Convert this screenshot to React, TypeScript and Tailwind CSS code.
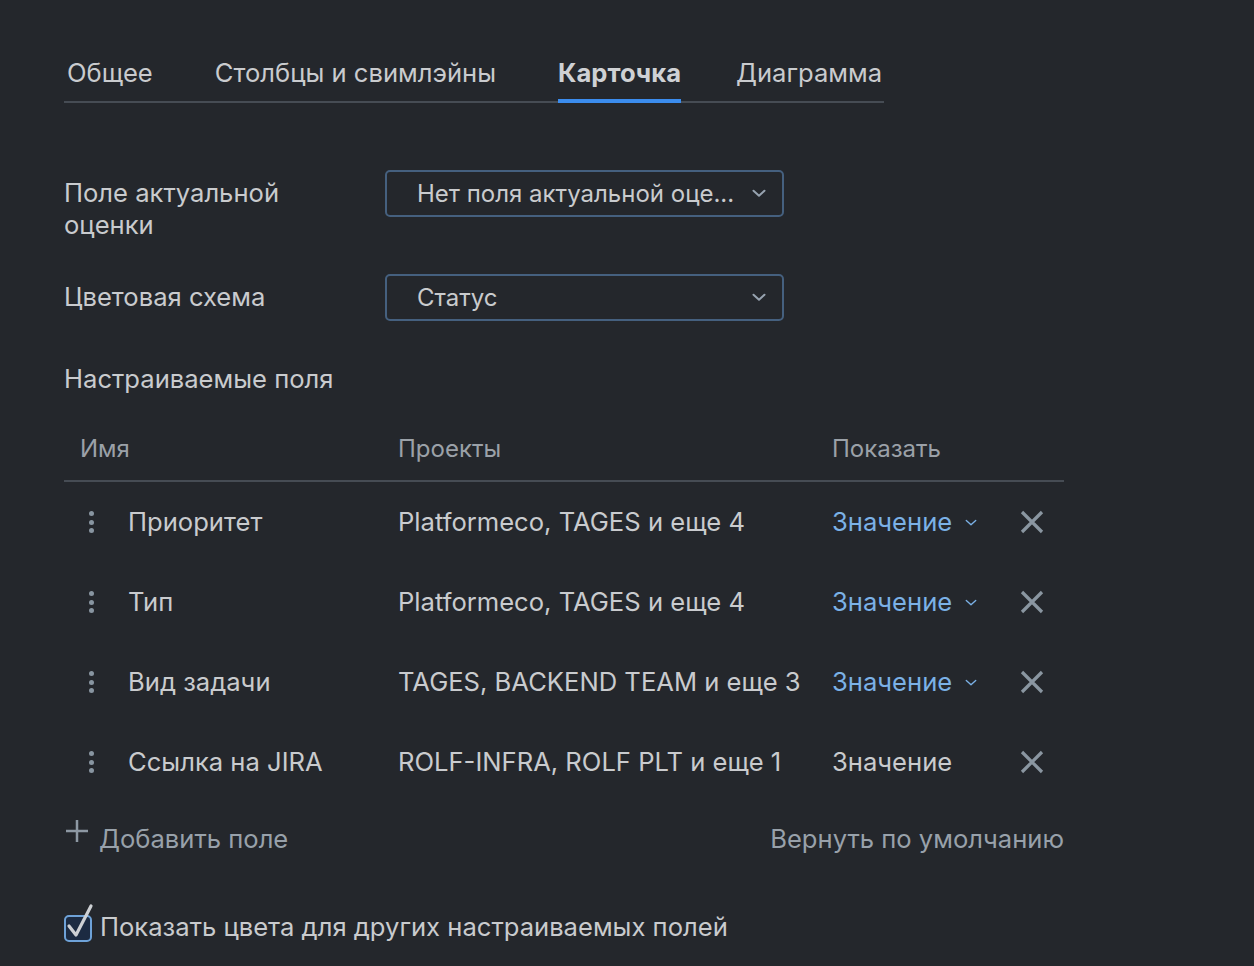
import React from 'react';

const tabs = ['Общее', 'Столбцы и свимлэйны', 'Карточка', 'Диаграмма'];
const tabGaps = ['ml-[3px]', 'ml-[62px]', 'ml-[62px]', 'ml-[55px]'];

interface Field { name: string; projects: string; editable: boolean; }

const fields: Field[] = [
  { name: 'Приоритет', projects: 'Platformeco, TAGES и еще 4', editable: true },
  { name: 'Тип', projects: 'Platformeco, TAGES и еще 4', editable: true },
  { name: 'Вид задачи', projects: 'TAGES, BACKEND TEAM и еще 3', editable: true },
  { name: 'Ссылка на JIRA', projects: 'ROLF-INFRA, ROLF PLT и еще 1', editable: false },
];

const Chevron = ({ className = '', w = 14, sw = 2 }: { className?: string; w?: number; sw?: number }) => (
  <svg width={w} height={w * 0.6} viewBox="0 0 14 8" fill="none" className={className}>
    <path d="M1.5 1.5 L7 6.5 L12.5 1.5" stroke="currentColor" strokeWidth={sw} strokeLinecap="round" strokeLinejoin="round" />
  </svg>
);

const Select = ({ value }: { value: string }) => (
  <div className="w-[399px] h-[47px] border-2 border-[#45607f] rounded-[5px] flex items-center pl-[30px] pr-[16px] justify-between text-[24px]">
    <span className="text-[#c9cbce]">{value}</span>
    <Chevron className="text-[#97a3b0]" />
  </div>
);

export default function App() {
  return (
    <main className="min-h-[966px] bg-[#24272c] text-[#c9cbce] text-[25.6px] leading-[32px] pl-[64px] pt-[57px]" style={{ fontFamily: 'Inter, "Noto Sans", sans-serif' }}>
      {/* tabs */}
      <div className="w-[820px] flex border-b-2 border-[#464c54] pb-[12px]">
        {tabs.map((t, i) => (
          <div key={t} className={`relative ${tabGaps[i]} ${i === 2 ? 'font-bold text-[#cfd1d4]' : ''}`}>
            {t}
            {i === 2 && <span className="absolute left-0 right-0 -bottom-[14px] h-[4px] bg-[#3b8ced]" />}
          </div>
        ))}
      </div>

      {/* form rows */}
      <div className="mt-[67px] flex items-start">
        <div className="w-[321px] pt-[7px]">Поле актуальной<br />оценки</div>
        <Select value="Нет поля актуальной оце..." />
      </div>
      <div className="mt-[33px] flex items-start">
        <div className="w-[321px] pt-[7px]">Цветовая схема</div>
        <Select value="Статус" />
      </div>

      <div className="mt-[42px]">Настраиваемые поля</div>

      {/* table */}
      <div className="w-[1000px] mt-[38px]">
        <div className="flex border-b-2 border-[#464c54] pb-[15px] text-[#9ba1a8] text-[24px]">
          <div className="w-[334px] pl-[16px]">Имя</div>
          <div className="w-[434px]">Проекты</div>
          <div>Показать</div>
        </div>
        {fields.map(f => (
          <div key={f.name} className="h-[80px] flex items-center">
            <div className="w-[334px] flex items-center">
              <div className="ml-[25px] w-[5px] flex flex-col gap-[3.5px]">
                <span className="w-[5px] h-[5px] rounded-full bg-[#8895a1]" />
                <span className="w-[5px] h-[5px] rounded-full bg-[#8895a1]" />
                <span className="w-[5px] h-[5px] rounded-full bg-[#8895a1]" />
              </div>
              <span className="ml-[34px]">{f.name}</span>
            </div>
            <div className="w-[434px]">{f.projects}</div>
            <div className="w-[188px] flex items-center">
              {f.editable ? (
                <>
                  <span className="text-[#7bb1e6]">Значение</span>
                  <Chevron className="ml-[13px] mt-[2px] text-[#7bb1e6]" w={12} sw={1.6} />
                </>
              ) : (
                <span>Значение</span>
              )}
            </div>
            <svg width="24" height="24" viewBox="0 0 24 24" className="text-[#8a96a1]">
              <path d="M2 2 L22 22 M22 2 L2 22" stroke="currentColor" strokeWidth="3.2" />
            </svg>
          </div>
        ))}
        <div className="mt-[21px] flex items-center justify-between text-[#98a1aa]">
          <div className="flex items-center">
            <svg width="24" height="24" viewBox="0 0 24 24" className="ml-[1px] -mt-[16px] text-[#8d98a3]">
              <path d="M12 1 V23 M1 12 H23" stroke="currentColor" strokeWidth="2.5" />
            </svg>
            <span className="ml-[10px]">Добавить поле</span>
          </div>
          <span>Вернуть по умолчанию</span>
        </div>
      </div>

      {/* checkbox */}
      <div className="mt-[56px] flex items-center">
        <div className="relative w-[28px] h-[27px] border-2 border-[#6ea2d8] bg-[#1c2b42] rounded-[5px] mt-[2px]">
          <svg width="30" height="38" viewBox="0 0 30 38" className="absolute -left-[1px] -top-[15px]" fill="none">
            <path d="M4 24 L11 33 L26 4" stroke="#cdd0d4" strokeWidth="3.2" strokeLinecap="round" strokeLinejoin="round" />
          </svg>
        </div>
        <span className="ml-[8px]">Показать цвета для других настраиваемых полей</span>
      </div>
    </main>
  );
}
